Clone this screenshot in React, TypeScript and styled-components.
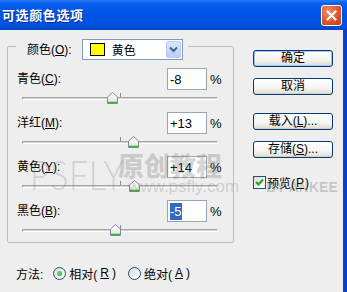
import React from 'react';
import styled, { createGlobalStyle } from 'styled-components';

const GlobalStyle = createGlobalStyle`
  html, body {
    margin: 0;
    padding: 0;
    background: #eeeeee;
  }
  body {
    font-family: "Liberation Sans", "Noto Sans CJK SC", sans-serif;
    font-size: 12px;
    color: #000;
  }
`;

const Window = styled.div`
  width: 347px;
  height: 292px;
  display: flex;
  flex-direction: column;
  overflow: hidden;
  background: #eeeeee;
`;

const TitleBar = styled.div`
  height: 30px;
  flex: none;
  box-sizing: border-box;
  padding: 0 5px 0 2px;
  display: flex;
  align-items: center;
  justify-content: space-between;
  background: linear-gradient(
    to bottom,
    #2a7bf6 0%,
    #0a5eef 12%,
    #0055e6 40%,
    #0053e0 80%,
    #0046c8 100%
  );
`;

const Title = styled.span`
  color: #fff;
  font-family: "Noto Sans CJK SC", sans-serif;
  font-weight: 700;
  font-size: 13px;
  letter-spacing: 0.6px;
  line-height: 16px;
  text-shadow: 1px 1px 0 #0b2a8c;
`;

const CloseButton = styled.div`
  width: 21px;
  height: 21px;
  box-sizing: border-box;
  border: 1px solid #fff;
  border-radius: 3px;
  display: flex;
  align-items: center;
  justify-content: center;
  background: radial-gradient(circle at 35% 30%, #f0906c 0%, #e0552c 55%, #c23b16 100%);
`;

const Body = styled.div`
  flex: 1;
  position: relative;
  display: grid;
  grid-template-columns: 227px 80px;
  column-gap: 19px;
  align-items: start;
  padding: 9px 0 0 7px;
  border-right: 4px solid #0a40d2;
`;

const LeftColumn = styled.div`
  display: flex;
  flex-direction: column;
`;

const GroupBox = styled.fieldset`
  margin: 0;
  min-width: 0;
  box-sizing: border-box;
  width: 227px;
  height: 204px;
  flex: none;
  border: 1px solid #bcbcbc;
  border-radius: 2px;
  padding: 15px 10px 3px 9px;
`;

const Legend = styled.legend`
  height: 14px;
  padding: 0 5px 0 11px;
  margin-left: -1px;
`;

const LegendInner = styled.div`
  height: 21px;
  display: flex;
  align-items: center;
  gap: 10px;
`;

const Label = styled.span`
  font-size: 12px;
  line-height: 16px;
  white-space: nowrap;
  flex: 1;
`;

const LegendLabel = styled(Label)`
  flex: none;
`;

const Select = styled.div`
  width: 101px;
  height: 21px;
  box-sizing: border-box;
  border: 1px solid #7f9db9;
  background: #fff;
  display: flex;
  align-items: center;
  padding: 0 1px 0 7px;
`;

const Swatch = styled.span<{ $color: string }>`
  width: 15px;
  height: 13px;
  box-sizing: border-box;
  border: 1px solid #000;
  background: ${(p) => p.$color};
  flex: none;
`;

const SelectText = styled.span`
  margin-left: 7px;
  flex: 1;
  font-size: 12px;
`;

const SelectArrow = styled.span`
  width: 15px;
  height: 17px;
  box-sizing: border-box;
  border: 1px solid #b6cbf5;
  border-radius: 2px;
  background: linear-gradient(to bottom, #dce7fd, #b9cdf8);
  display: flex;
  align-items: center;
  justify-content: center;
`;

const Rows = styled.div`
  display: flex;
  flex-direction: column;
  gap: 6px;
`;

const ParamRow = styled.div`
  display: flex;
  flex-direction: column;
`;

const ValueLine = styled.div`
  height: 22px;
  display: flex;
  align-items: center;
`;

const ValueBox = styled.div`
  width: 40px;
  height: 22px;
  box-sizing: border-box;
  border: 1px solid #98a6b6;
  background: #fff;
  display: flex;
  align-items: center;
  padding-left: 2px;
  font-size: 13px;
`;

const Selected = styled.span`
  background: #316ac5;
  color: #fff;
  padding: 1px 0;
`;

const Percent = styled.span`
  width: 16px;
  box-sizing: border-box;
  padding-left: 3px;
  font-size: 13px;
`;

const SliderArea = styled.div`
  height: 16px;
  margin: 0 5px;
  position: relative;
  display: flex;
  align-items: center;
`;

const Track = styled.div`
  width: 100%;
  height: 1px;
  border-top: 1px solid #a3a3a3;
  border-bottom: 1px solid #ffffff;
  border-left: 1px solid #a3a3a3;
  border-right: 1px solid #ffffff;
  background: #d6d6d6;
  border-radius: 1px;
`;

const CenterTick = styled.span`
  position: absolute;
  left: 50%;
  top: 3px;
  width: 1px;
  height: 4px;
  background: #8a8a8a;
`;

const Thumb = styled.svg`
  position: absolute;
  top: 2px;
  width: 11px;
  height: 12px;
  margin-left: -5px;
`;

const MethodRow = styled.div`
  margin-top: 22px;
  height: 16px;
  flex: none;
  padding-left: 9px;
  display: flex;
  align-items: center;
`;

const MethodLabel = styled.span`
  font-size: 12px;
  margin-right: 10px;
`;

const RadioOption = styled.label`
  display: flex;
  align-items: center;
  gap: 3px;
  font-size: 12px;
  margin-right: 12px;
`;

const RadioCircle = styled.span<{ $on?: boolean }>`
  width: 13px;
  height: 13px;
  box-sizing: border-box;
  border: 1px solid #1c5180;
  border-radius: 50%;
  background: linear-gradient(135deg, #dcdcd4, #ffffff);
  display: flex;
  align-items: center;
  justify-content: center;

  &::after {
    content: '';
    display: ${(p) => (p.$on ? 'block' : 'none')};
    width: 5px;
    height: 5px;
    border-radius: 50%;
    background: radial-gradient(circle at 35% 35%, #7be07a, #21a121);
  }
`;

const ButtonColumn = styled.div`
  display: flex;
  flex-direction: column;
  padding-top: 11px;
`;

const Button = styled.div<{ $gap: number; $isDefault?: boolean }>`
  margin-top: ${(p) => p.$gap}px;
  height: 17px;
  box-sizing: border-box;
  border: 1px solid #003c74;
  border-radius: 3px;
  background: linear-gradient(to bottom, #ffffff 0%, #f4f4f0 60%, #dedbd2 100%);
  box-shadow: ${(p) => (p.$isDefault ? 'inset 0 0 0 1px #a8c3f2' : 'inset 0 -1px 0 #d6d0c5')};
  display: flex;
  align-items: center;
  justify-content: center;
  font-size: 12px;
  line-height: 15px;
`;

const CheckRow = styled.label`
  margin-top: 16px;
  display: flex;
  align-items: center;
  gap: 1px;
  font-size: 12px;
`;

const CheckBox = styled.span`
  width: 13px;
  height: 13px;
  box-sizing: border-box;
  border: 1px solid #1c5180;
  background: linear-gradient(135deg, #dcdcd4, #ffffff);
  display: flex;
  align-items: center;
  justify-content: center;
`;

const Watermark = styled.div`
  position: absolute;
  left: 30px;
  top: 121px;
  display: flex;
  align-items: flex-end;
  white-space: nowrap;
  pointer-events: none;
`;

const WmLogo = styled.span`
  width: 88px;
  display: inline-block;
  font-family: "Lato", "DejaVu Sans", sans-serif;
  font-weight: 300;
  font-size: 42px;
  line-height: 42px;
  letter-spacing: 1px;
  transform: scaleX(0.8);
  transform-origin: left center;
  color: rgba(120, 120, 120, 0.26);
`;

const WmStack = styled.div`
  display: flex;
  flex-direction: column;
`;

const WmTitle = styled.span`
  font-family: "Noto Sans CJK SC", sans-serif;
  font-weight: 900;
  font-size: 26px;
  line-height: 28px;
  color: rgba(110, 110, 110, 0.28);
`;

const WmUrl = styled.span`
  font-family: "Liberation Sans", sans-serif;
  font-size: 17px;
  line-height: 16px;
  margin-left: 10px;
  color: rgba(120, 120, 120, 0.28);
`;

const WmBy = styled.span`
  font-family: "Liberation Sans", sans-serif;
  font-weight: 700;
  font-size: 14px;
  line-height: 16px;
  margin-left: 27px;
  color: rgba(90, 90, 90, 0.28);
`;

type Param = { label: string; key: string; value: number; selected?: boolean };

const params: Param[] = [
  { label: '青色', key: 'C', value: -8 },
  { label: '洋红', key: 'M', value: 13 },
  { label: '黄色', key: 'Y', value: 14 },
  { label: '黑色', key: 'B', value: -5, selected: true },
];

const fmt = (v: number) => (v > 0 ? `+${v}` : `${v}`);

const SliderThumb = ({ value }: { value: number }) => (
  <Thumb viewBox="0 0 11 12" style={{ left: `${((value + 100) / 200) * 100}%` }}>
    <defs>
      <linearGradient id="thumbFill" x1="0" y1="0" x2="0" y2="1">
        <stop offset="0" stopColor="#ffffff" />
        <stop offset="1" stopColor="#e2e2dc" />
      </linearGradient>
    </defs>
    <polygon points="0.5,5 5.5,0.5 10.5,5 10.5,11.5 0.5,11.5" fill="url(#thumbFill)" stroke="#7c8c9c" />
    <line x1="1" y1="10.5" x2="10" y2="10.5" stroke="#2fb52f" strokeWidth="1.5" />
  </Thumb>
);

export default function App() {
  return (
    <Window>
      <GlobalStyle />
      <TitleBar>
        <Title>可选颜色选项</Title>
        <CloseButton>
          <svg width="11" height="11" viewBox="0 0 11 11">
            <path d="M1.5 1.5 L9.5 9.5 M9.5 1.5 L1.5 9.5" stroke="#fff" strokeWidth="2" strokeLinecap="square" />
          </svg>
        </CloseButton>
      </TitleBar>
      <Body>
        <LeftColumn>
          <GroupBox>
            <Legend>
              <LegendInner>
                <LegendLabel>
                  颜色(<u>O</u>):
                </LegendLabel>
                <Select>
                  <Swatch $color="#ffff00" />
                  <SelectText>黄色</SelectText>
                  <SelectArrow>
                    <svg width="9" height="7" viewBox="0 0 9 7">
                      <path d="M1 1.5 L4.5 5 L8 1.5" fill="none" stroke="#4d6185" strokeWidth="2" />
                    </svg>
                  </SelectArrow>
                </Select>
              </LegendInner>
            </Legend>
            <Rows>
              {params.map((p) => (
                <ParamRow key={p.key}>
                  <ValueLine>
                    <Label>
                      {p.label}(<u>{p.key}</u>):
                    </Label>
                    <ValueBox>{p.selected ? <Selected>{fmt(p.value)}</Selected> : fmt(p.value)}</ValueBox>
                    <Percent>%</Percent>
                  </ValueLine>
                  <SliderArea>
                    <Track />
                    <CenterTick />
                    <SliderThumb value={p.value} />
                  </SliderArea>
                </ParamRow>
              ))}
            </Rows>
          </GroupBox>
          <MethodRow>
            <MethodLabel>方法:</MethodLabel>
            <RadioOption>
              <RadioCircle $on />
              相对(<u>R</u>)
            </RadioOption>
            <RadioOption>
              <RadioCircle />
              绝对(<u>A</u>)
            </RadioOption>
          </MethodRow>
        </LeftColumn>
        <ButtonColumn>
          <Button $gap={0} $isDefault>
            确定
          </Button>
          <Button $gap={11}>取消</Button>
          <Button $gap={18}>
            载入(<u>L</u>)...
          </Button>
          <Button $gap={11}>
            存储(<u>S</u>)...
          </Button>
          <CheckRow>
            <CheckBox>
              <svg width="9" height="9" viewBox="0 0 9 9">
                <path d="M1 4 L3.5 6.5 L8 1.5" fill="none" stroke="#21a121" strokeWidth="2" />
              </svg>
            </CheckBox>
            预览(<u>P</u>)
          </CheckRow>
        </ButtonColumn>
        <Watermark>
          <WmLogo>PSFLY</WmLogo>
          <WmStack>
            <WmTitle>原创教程</WmTitle>
            <WmUrl>www.psfly.com</WmUrl>
          </WmStack>
          <WmBy>BY ANKEE</WmBy>
        </Watermark>
      </Body>
    </Window>
  );
}
